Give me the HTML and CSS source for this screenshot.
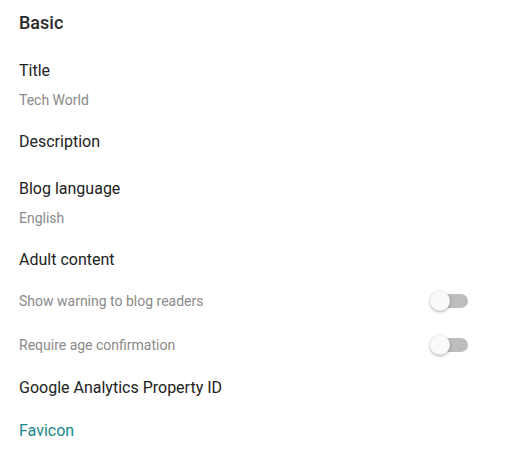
FILE: index.html
```html
<!DOCTYPE html>
<html>
<head>
<meta charset="utf-8">
<link rel="stylesheet" href="styles.css">
</head>
<body>
<div class="panel">
  <h2 class="heading">Basic</h2>
  <div class="label first">Title</div>
  <div class="value">Tech World</div>
  <div class="label gap-a">Description</div>
  <div class="label gap-b">Blog language</div>
  <div class="value">English</div>
  <div class="label gap-a">Adult content</div>
  <div class="toggle-row row-1">
    <span class="sub">Show warning to blog readers</span>
    <span class="switch"><span class="track"></span><span class="thumb"></span></span>
  </div>
  <div class="toggle-row row-2">
    <span class="sub">Require age confirmation</span>
    <span class="switch"><span class="track"></span><span class="thumb"></span></span>
  </div>
  <div class="label gap-a">Google Analytics Property ID</div>
  <div class="label link gap-c">Favicon</div>
</div>
</body>
</html>
```

FILE: styles.css
```css
html, body {
  margin: 0;
  padding: 0;
  background: #ffffff;
}
body {
  font-family: Roboto, "Noto Sans", "Liberation Sans", sans-serif;
  color: #212121;
}
.panel {
  padding: 11px 48px 0 19px;
}
.heading {
  margin: 0;
  font-size: 18px;
  font-weight: 500;
  line-height: 24px;
  color: #2b2b2b;
}
.label {
  font-size: 16px;
  line-height: 20px;
  color: #222222;
}
.first { margin-top: 26px; }
.gap-a { margin-top: 22px; }
.gap-b { margin-top: 27px; }
.gap-c { margin-top: 23px; }
.value {
  margin-top: 9px;
  font-size: 14px;
  line-height: 20px;
  color: #8a8a8a;
}
.link { color: #17878c; }
.toggle-row {
  display: flex;
  align-items: center;
  justify-content: space-between;
  height: 22px;
}
.row-1 { margin-top: 20px; }
.row-2 { margin-top: 22px; }
.sub {
  font-size: 14px;
  color: #8a8a8a;
  line-height: 20px;
}
.switch {
  position: relative;
  width: 38px;
  height: 20px;
  display: inline-block;
}
.track {
  position: absolute;
  left: 4px;
  right: 0;
  top: 3px;
  height: 14px;
  border-radius: 7px;
  background: #bdbdbd;
}
.thumb {
  position: absolute;
  left: 0;
  top: 0;
  width: 20px;
  height: 20px;
  border-radius: 50%;
  background: #fafafa;
  box-shadow: 0 1px 3px rgba(0, 0, 0, 0.35);
}
```
